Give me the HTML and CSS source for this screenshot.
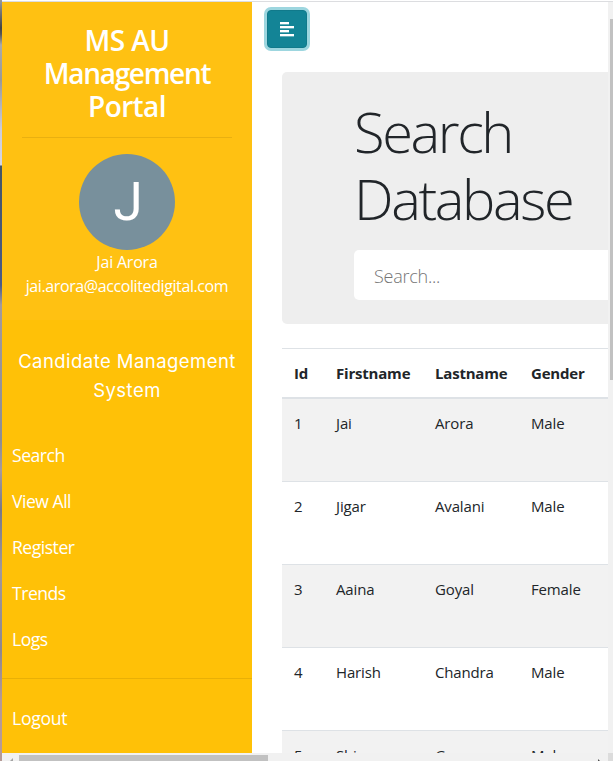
FILE: index.html
```html
<!DOCTYPE html>
<html lang="en">
<head>
<meta charset="utf-8">
<title>MS AU Management Portal</title>
<link rel="stylesheet" href="styles.css">
</head>
<body>
<div class="edge"></div>
<div class="window">
  <div class="viewport">
    <aside class="sidebar">
      <header class="profile">
        <h3 class="brand">MS AU<br><span class="tight">Management</span><br>Portal</h3>
        <div class="avatar"><span class="initial">J</span></div>
        <div class="name">Jai Arora</div>
        <div class="email">jai.arora@accolitedigital.com</div>
      </header>
      <p class="tagline">Candidate Management<br>System</p>
      <nav class="menu">
        <a>Search</a>
        <a>View All</a>
        <a>Register</a>
        <a>Trends</a>
        <a>Logs</a>
      </nav>
      <nav class="menu logout"><a>Logout</a></nav>
    </aside>
    <main class="content">
      <button class="toggle" type="button" aria-label="Toggle sidebar">
        <svg width="14" height="15" viewBox="0 0 14 15" fill="#fff" shape-rendering="crispEdges">
          <path d="M0 0h9v2H0zM0 4h14v2H0zM0 8h9v2H0zM0 12h14v2H0z"/>
          <path opacity=".35" d="M0 2h9v1H0zM0 6h14v1H0zM0 10h9v1H0zM0 14h14v1H0z"/>
        </svg>
      </button>
      <section class="jumbotron">
        <h1>Search<br>Database</h1>
        <div class="field">Search...</div>
      </section>
      <table class="candidates">
        <colgroup><col class="c-id"><col class="c-first"><col class="c-last"><col class="c-gender"></colgroup>
        <thead><tr><th>Id</th><th>Firstname</th><th>Lastname</th><th>Gender</th></tr></thead>
        <tbody>
          <tr><td>1</td><td>Jai</td><td>Arora</td><td>Male</td></tr>
          <tr><td>2</td><td>Jigar</td><td>Avalani</td><td>Male</td></tr>
          <tr><td>3</td><td>Aaina</td><td>Goyal</td><td>Female</td></tr>
          <tr><td>4</td><td>Harish</td><td>Chandra</td><td>Male</td></tr>
          <tr><td>5</td><td>Shivam</td><td>Gaur</td><td>Male</td></tr>
        </tbody>
      </table>
    </main>
    <div class="vbar"><div class="vthumb"></div></div>
  </div>
  <div class="hbar">
    <div class="arrow left"><svg width="5" height="5" viewBox="0 0 5 5"><path d="M5 0v5H0z" fill="#a3a3a3"/></svg></div>
    <div class="hthumb"></div>
    <div class="arrow right"><svg width="4" height="4" viewBox="0 0 4 4"><path d="M0 0l4 4H0z" fill="#505050"/></svg></div>
    <div class="corner"></div>
  </div>
</div>
</body>
</html>
```

FILE: styles.css
```css
* { box-sizing: border-box; }
body {
  margin: 0;
  width: 613px;
  height: 761px;
  overflow: hidden;
  display: flex;
  background: #fff;
  color: #212529;
  font: 16px/24px "Open Sans", "Noto Sans", sans-serif;
}
.edge {
  width: 2px;
  background: linear-gradient(#999 0, #444 28px, #555 34px, #aaa 45px, #999 80px, #ccd 130px, #d5d5e5 165px, #456 166px, #4a5a88 285px, #a39a9e 305px, #8d8d95 440px, #a69a9e 470px, #77788a 510px, #a1989b 570px, #8e8791 650px, #b59a96 700px, #b59a96 761px);
}
.window {
  flex: 1;
  margin-top: 1px;
  border-top: 1px solid #dcdde0;
  display: flex;
  flex-direction: column;
  min-width: 0;
}
.viewport { height: 751px; display: flex; overflow: hidden; }
.sidebar { width: 250px; flex: none; background: #ffc107; color: #fff; }
.profile { height: 318px; padding: 22px 20px 0; background: #ffc112; text-align: center; }
.brand {
  margin: 0 0 16px;
  padding-bottom: 14px;
  border-bottom: 1px solid #e9b010;
  font-size: 28px;
  line-height: 33px;
  font-weight: 650;
  letter-spacing: -.6px;
}
.tight { letter-spacing: -1.3px; }
.avatar {
  width: 96px;
  height: 96px;
  margin: 0 auto;
  padding-left: 2px;
  border-radius: 50%;
  background: #78909c;
  display: flex;
  align-items: center;
  justify-content: center;
  font: 400 53px/96px Roboto, sans-serif;
}
.name, .email { white-space: nowrap; margin: 0 -10px; }
.name { letter-spacing: -.2px; }
.email { letter-spacing: -.4px; }
.tagline {
  margin: 0;
  padding-top: 27px;
  height: 113px;
  text-align: center;
  font: 18.5px/29px Inter, sans-serif;
  letter-spacing: .45px;
  white-space: nowrap;
}
.menu a { display: block; height: 46px; padding: 8px 10px 0; font-size: 17.6px; line-height: 28px; letter-spacing: -.5px; }
.logout { margin-top: 15px; border-top: 1px solid #e9b006; padding-top: 17px; }
.logout a { letter-spacing: -.3px; }
.content { width: 356px; flex: none; overflow: hidden; padding: 8px 0 0 15px; }
.toggle {
  display: flex;
  align-items: center;
  justify-content: center;
  width: 40px;
  height: 38px;
  padding: 0;
  border: 1px solid #117a8b;
  border-radius: 4px;
  background: #138496;
  box-shadow: 0 0 0 3px #9dd6df;
}
.jumbotron { width: 500px; height: 252px; margin: 24px 0 24px 15px; padding: 26px 0 0 72px; border-radius: 5px; background: #eee; }
h1 { margin: 0 0 17px; height: 135px; font-size: 56px; line-height: 67.2px; font-weight: 300; letter-spacing: -2.4px; white-space: nowrap; }
.field { width: 400px; height: 50px; padding: 0 20px; border-radius: 5px; background: #fff; color: #757575; font-size: 18px; line-height: 52px; font-weight: 300; letter-spacing: -.25px; }
.candidates { width: 326px; margin-left: 15px; table-layout: fixed; border-spacing: 0; }
.c-id { width: 42px; }
.c-first { width: 99px; }
.c-last { width: 96px; }
.c-gender { width: 89px; }
th, td { padding: 12px 0 12px 12px; text-align: left; vertical-align: top; border-top: 1px solid #dee2e6; }
th { border-bottom: 2px solid #dee2e6; font-weight: 700; font-size: 15px; letter-spacing: -.2px; }
td { height: 83px; font-size: 15px; letter-spacing: -.15px; }
tbody tr:first-child td { height: 82px; border-top: 0; }
tbody tr:nth-child(odd) { background: #f2f2f2; }
.vbar { width: 5px; flex: none; background: #f1f1f1; padding: 17px 0 0 2px; }
.vthumb { height: 361px; background: #c1c1c1; }
.hbar { height: 8px; display: flex; background: #f1f1f1; }
.arrow { padding-top: 4px; line-height: 0; overflow: hidden; }
.left { width: 17px; padding-left: 6px; }
.hthumb { width: 249px; height: 6px; margin-top: 2px; background: #c1c1c1; }
.right { margin-left: auto; width: 10px; }
.corner { width: 5px; background: #dcdcdc; }
```
